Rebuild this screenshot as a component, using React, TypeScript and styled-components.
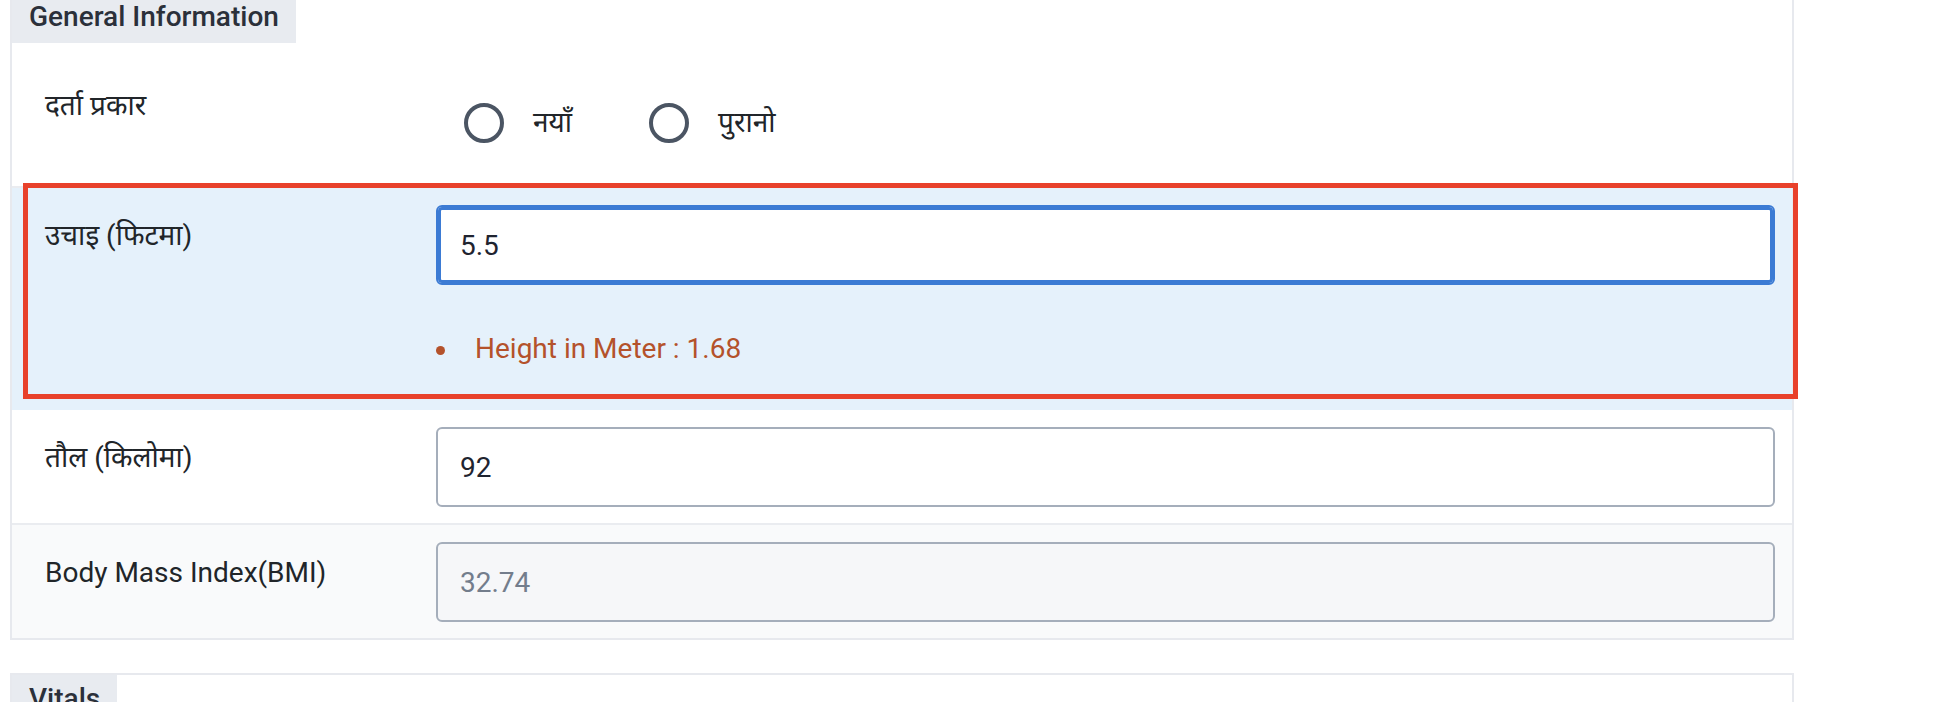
import React, { useEffect, useRef } from 'react';
import styled, { createGlobalStyle, css } from 'styled-components';

const FONT = `Roboto, "Noto Sans", "Noto Sans Devanagari", "Liberation Sans", sans-serif`;

const GlobalStyle = createGlobalStyle`
  * { box-sizing: border-box; }
  html, body { margin: 0; padding: 0; background: #ffffff; }
  body {
    font-family: ${FONT};
    color: #212529;
    overflow: hidden;
    -webkit-font-smoothing: antialiased;
  }
`;

const Page = styled.main`
  width: 1794px;
  margin-top: -9px;
  padding-left: 10px;
  display: flex;
  flex-direction: column;
  gap: 33px;
`;

const Card = styled.section<{ $minHeight?: number }>`
  display: flex;
  flex-direction: column;
  background: #ffffff;
  border: 2px solid #e7e9ee;
  min-height: ${(p) => (p.$minHeight ? `${p.$minHeight}px` : 'auto')};
`;

const Tab = styled.h2`
  align-self: flex-start;
  margin: 0;
  padding: 7px 17px 9px 17px;
  background: #e8ebf0;
  font-family: ${FONT};
  font-size: 28px;
  line-height: 34px;
  font-weight: 500;
  color: #2b303a;
`;

type Tone = 'plain' | 'active' | 'muted';
const toneBg: Record<Tone, string> = {
  plain: '#ffffff',
  active: '#e5f1fb',
  muted: '#f9fafb',
};

const Row = styled.div<{ $tone: Tone }>`
  position: relative;
  display: grid;
  grid-template-columns: 374px 1fr;
  column-gap: 17px;
  align-items: start;
  padding: 17px 17px 16px 33px;
  background: ${(p) => toneBg[p.$tone]};
  border-bottom: 2px solid ${(p) => (p.$tone === 'active' ? toneBg.active : '#eaecf0')};
  &:last-child {
    border-bottom: 0;
  }
`;

const ChoiceRow = styled(Row)`
  padding-top: 32px;
  padding-bottom: 0;
`;

const FieldLabel = styled.label`
  padding-top: 10px;
  font-size: 28px;
  line-height: 42px;
  color: #212529;
`;

const FieldStack = styled.div`
  display: flex;
  flex-direction: column;
`;

const TextInput = styled.input<{ $focused?: boolean }>`
  width: 100%;
  height: 80px;
  margin: 0;
  padding: 0 22px;
  font-family: ${FONT};
  font-size: 28px;
  color: #1f2430;
  caret-color: #111111;
  background: #ffffff;
  border: 2px solid #a5aebb;
  border-radius: 6px;
  outline: none;
  ${(p) =>
    p.$focused &&
    css`
      border-color: #3b7bd4;
      box-shadow: inset 0 0 0 3px #3b7bd4;
    `}
  &[readonly] {
    background: #f6f7f9;
    color: #737d8c;
  }
`;

const HintList = styled.ul`
  list-style: none;
  margin: 43px 0 22px;
  padding: 0;
`;

const HintItem = styled.li`
  display: flex;
  align-items: center;
  gap: 30px;
  font-size: 28px;
  line-height: 42px;
  color: #b4522b;
  &::before {
    content: '';
    flex: none;
    width: 9px;
    height: 9px;
    margin-top: 3px;
    border-radius: 50%;
    background: currentColor;
  }
`;

const RadioGroup = styled.div`
  display: flex;
  align-items: center;
  gap: 77px;
  padding: 28px 0 43px 28px;
`;

const RadioOption = styled.label`
  display: flex;
  align-items: center;
  gap: 29px;
  font-size: 28px;
  line-height: 40px;
  color: #212529;
`;

const RadioInput = styled.input.attrs({ type: 'radio' })`
  appearance: none;
  -webkit-appearance: none;
  flex: none;
  width: 40px;
  height: 40px;
  margin: 0;
  border: 4px solid #4b5563;
  border-radius: 50%;
  background: #ffffff;
`;

const Annotation = styled.div`
  position: absolute;
  top: -5px;
  left: 11px;
  right: -6px;
  bottom: 9px;
  border: 5px solid #e8412b;
  pointer-events: none;
  z-index: 2;
`;

export default function App() {
  const heightRef = useRef<HTMLInputElement>(null);

  useEffect(() => {
    const el = heightRef.current;
    if (el) {
      el.focus();
      const end = el.value.length;
      el.setSelectionRange(end, end);
    }
  }, []);

  return (
    <>
      <GlobalStyle />
      <Page>
        <Card>
          <Tab>General Information</Tab>

          <ChoiceRow $tone="plain">
            <FieldLabel>दर्ता प्रकार</FieldLabel>
            <RadioGroup>
              <RadioOption>
                <RadioInput name="regType" value="new" />
                नयाँ
              </RadioOption>
              <RadioOption>
                <RadioInput name="regType" value="old" />
                पुरानो
              </RadioOption>
            </RadioGroup>
          </ChoiceRow>

          <Row $tone="active">
            <FieldLabel htmlFor="height">उचाइ (फिटमा)</FieldLabel>
            <FieldStack>
              <TextInput id="height" ref={heightRef} $focused defaultValue="5.5" />
              <HintList>
                <HintItem>Height in Meter : 1.68</HintItem>
              </HintList>
            </FieldStack>
            <Annotation />
          </Row>

          <Row $tone="plain">
            <FieldLabel htmlFor="weight">तौल (किलोमा)</FieldLabel>
            <TextInput id="weight" defaultValue="92" />
          </Row>

          <Row $tone="muted">
            <FieldLabel htmlFor="bmi">Body Mass Index(BMI)</FieldLabel>
            <TextInput id="bmi" readOnly value="32.74" />
          </Row>
        </Card>

        <Card $minHeight={200}>
          <Tab>Vitals</Tab>
        </Card>
      </Page>
    </>
  );
}
